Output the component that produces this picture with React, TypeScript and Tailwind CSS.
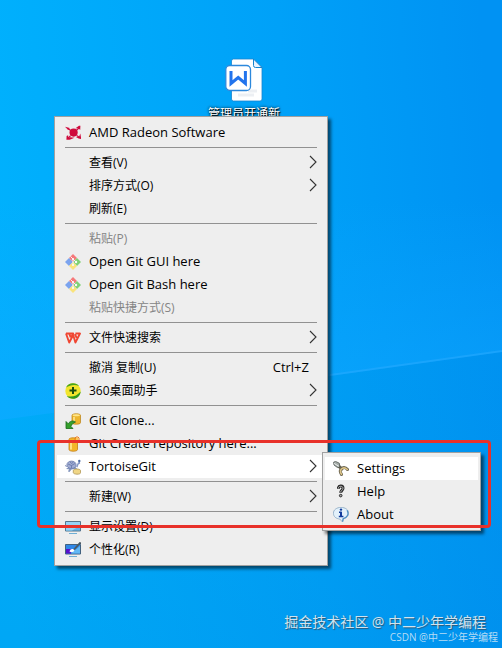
import type { ReactNode } from "react"
import clsx from "clsx"

interface MenuEntry {
  label: string
  icon?: ReactNode
  shortcut?: string
  disabled?: boolean
  active?: boolean
  arrow?: boolean
  latin?: boolean
  children?: MenuEntry[]
}

const Icon = ({ children }: { children: ReactNode }) => (
  <svg viewBox="0 0 16 16" className="h-4 w-4" aria-hidden="true">
    {children}
  </svg>
)

const RadeonIcon = () => (
  <Icon>
    <g fill="#cf0a3c">
      <circle cx="8.6" cy="7.6" r="4.1" />
      <path d="M0 1.800L4.800 3 3.200 5zM10.500 3.200L14 .8h1.400l-.2 4.200-1.500-1.400zM15.300 8.600l1 5.400-2.600-.4-2.800-1.600 3.200-.2zM5.500 12.300l4 .5-4.800 2H1.400L1.600 11l1.500-.8.3 2.200z" />
    </g>
    <path
      d="M2.800 3.400l2.600 1.800M14 3l-2.600 2.400M14.800 12.600l-3.200-2.200M2.600 13.600l3-3"
      stroke="#cf0a3c"
      strokeWidth="1.200"
      fill="none"
    />
  </Icon>
)

const GitIcon = () => (
  <Icon>
    <path d="M8 0l4 4-4 4-4-4z" fill="#f5797a" />
    <path d="M4 4l4 4-4 4-4-4z" fill="#7ba3ee" />
    <path d="M12 4l4 4-4 4-4-4z" fill="#80d174" />
    <path d="M8 8l4 4-4 4-4-4z" fill="#f9e37c" />
    <path d="M5.500 2.500L8 5v6M8 5l3 3" stroke="#f6f3f3" strokeWidth="1" fill="none" />
    <g fill="#f8fafc">
      <circle cx="8" cy="5" r="1.100" />
      <circle cx="11" cy="8" r="1.200" />
      <circle cx="8" cy="11" r="1.100" />
    </g>
  </Icon>
)

const WpsIcon = () => (
  <Icon>
    <path
      d="M1 3.500h7.200L6.400 7M1 3.500l3.200 9 4-7.500 2.200 7.500L15 3.500h-4.600M4.300 3.800l1.400 3.500M10 4l1.600 3.800"
      fill="none"
      stroke="#f04632"
      strokeWidth="1.900"
      strokeLinejoin="round"
    />
  </Icon>
)

const Desktop360Icon = () => (
  <Icon>
    <circle cx="8" cy="8" r="7.700" fill="#f2e52c" />
    <path d="M1 4.500C2.500 1.700 5 .3 8 .3c2.600 0 4.700 1 6 2.600C9.500 1.300 5 2 1 4.500z" fill="#47a51c" />
    <path d="M15.700 8.500c-.5 4.500-3.700 7.300-7.700 7.300-2.600 0-4.700-1-6.200-2.800 5 1.500 9.700.4 13.900-4.500z" fill="#2f9820" />
    <path d="M8 4v7M4.500 7.500h7" stroke="#174d10" strokeWidth="2" />
  </Icon>
)

const CloneIcon = () => (
  <Icon>
    <path d="M7 2.300C7 .3 15.500.3 15.500 2.300v7.400c0 2-8.500 2-8.500 0z" fill="#edb62e" stroke="#b88016" strokeWidth=".7" />
    <ellipse cx="11.250" cy="2.300" rx="3.600" ry="1" fill="#ffe58a" />
    <path d="M9 4v5.500" stroke="#ffe79a" strokeWidth="1.500" />
    <path d="M1 8.500v7h7l-2.200-2.200C7 11.200 8 10 10.500 9 8 7.200 5 8 3.200 10.700z" fill="#35a02c" stroke="#17691a" strokeWidth=".8" />
  </Icon>
)

const CreateIcon = () => (
  <Icon>
    <path d="M4 3.300c0-2 8.500-2 8.500 0v10.200c0 2.300-8.500 2.300-8.500 0z" fill="#f3b62a" stroke="#c47c10" strokeWidth=".8" />
    <path d="M6 5v8.500" stroke="#ffe58b" strokeWidth="1.800" />
    <path d="M12 0v6M9 3h6M10 1l4 4M14 1l-4 4" stroke="#ef7d18" strokeWidth="1" />
    <circle cx="12" cy="3" r="1" fill="#ffe067" />
  </Icon>
)

const TortoiseIcon = () => (
  <Icon>
    <path d="M1 10l2.500-2h7l2 2.500-2 .5-1-1-3 .5L4.500 13 3 12.500l1-2.200z" fill="#8395bd" />
    <ellipse cx="6.500" cy="5.800" rx="4.600" ry="3.700" fill="#a0acd2" stroke="#6c7cab" strokeWidth=".8" />
    <path d="M3 5l3.500 1.500L10 4.500M6.500 6.500V9M5 2.800l1.500 1.700L8.500 3M0 6.500l2 1" stroke="#6275a8" strokeWidth=".8" fill="none" />
    <path d="M11 7.500l2-4 1.800-.7.400 1.700-1.700 1-1 3z" fill="#8798c5" />
    <circle cx="14.300" cy="2" r="1.200" fill="#506fa6" />
    <path d="M8.300 11.500c0-2 7-2 7.200 0v2.300c0 2-6.800 1.700-7.200 0z" fill="#f0d686" stroke="#af9654" strokeWidth=".8" />
  </Icon>
)

const DisplayIcon = () => (
  <Icon>
    <path d="M.5 2.500h15v9.500H.5z" fill="#62b5ed" stroke="#55768e" />
    <path d="M1 3h14v4L7 11.500H1z" fill="#95d3f8" />
    <path d="M4 14.500h8" stroke="#6faed4" strokeWidth="1" />
  </Icon>
)

const PersonalizeIcon = () => (
  <Icon>
    <path d="M.5 2.500h15v9.500H.5z" fill="#2f87e8" stroke="#41617f" />
    <path d="M1 7h5v4.500H1z" fill="#5711cc" />
    <path d="M6 11.500L15 4v7.500z" fill="#62b8f5" />
    <path d="M4.500 9.500c.5-2 2-2.800 4-2.300l1 1.300c-1 1.700-3 2.200-5 1z" fill="#fff" />
    <path d="M9 7.500L15.600.3" stroke="#4c5963" strokeWidth="1.800" />
    <path d="M4 14.500h8" stroke="#6faed4" />
  </Icon>
)

const SettingsIcon = () => (
  <Icon>
    <path d="M6 5.500l3 2.500M8.500 13.500C6.500 11 7 8 9.500 6.800c2-.8 3.500-.1 5 1.700" fill="none" stroke="#67614e" strokeWidth="3" strokeLinecap="round" />
    <path d="M8.500 13.300c-1.700-2.500-1.300-5.100 1.100-6.100 1.900-.8 3.300 0 4.700 1.300" fill="none" stroke="#dcc487" strokeWidth="1.600" strokeLinecap="round" />
    <path d="M.6 1.200L2.500.4l3.800 1.800.6 3.600-2.600.6L1 4z" fill="#a5aca8" stroke="#4d5450" strokeWidth=".8" />
    <path d="M1 2.400l5 3" stroke="#e9eceb" strokeWidth="1" />
  </Icon>
)

const HelpIcon = () => (
  <Icon>
    <path d="M5.500 4.800V3.500C6 1.500 10 1.500 10 4.200c0 2.100-2.300 2.200-2.300 4.500" fill="none" stroke="#282828" strokeWidth="3" />
    <path d="M5.500 4.300v-.8C6 1.800 10 1.800 10 4.200c0 2.100-2.300 2.200-2.300 4" fill="none" stroke="#b8b8b8" strokeWidth="1" />
    <circle cx="7.700" cy="11.600" r="1.300" fill="#aaa" stroke="#282828" />
  </Icon>
)

const AboutIcon = () => (
  <Icon>
    <path d="M8 .4c4.300 0 7.600 2.400 7.600 5.800 0 2.800-2.200 4.900-5.300 5.600L9.500 15l-2.800-3C3 11.700.4 9.500.4 6.200.4 2.900 3.700.4 8 .4z" fill="#e3f1fb" stroke="#89a8c3" strokeWidth=".8" />
    <path d="M14 3.300c2.300 3.800.2 7.400-3.800 8.300l-.6 3" fill="none" stroke="#4d8fc4" strokeWidth="1.200" />
    <path d="M6 5.200h2v4.300M5.800 9.500h4.600" fill="none" stroke="#123c9c" strokeWidth="1.400" />
    <path d="M8 5v4" stroke="#123c9c" strokeWidth="2" />
    <circle cx="8" cy="2.600" r="1.200" fill="#123c9c" />
  </Icon>
)

const groups: MenuEntry[][] = [
  [{ label: "AMD Radeon Software", icon: <RadeonIcon />, latin: true }],
  [
    { label: "查看(V)", arrow: true },
    { label: "排序方式(O)", arrow: true },
    { label: "刷新(E)" },
  ],
  [
    { label: "粘贴(P)", disabled: true },
    { label: "Open Git GUI here", icon: <GitIcon />, latin: true },
    { label: "Open Git Bash here", icon: <GitIcon />, latin: true },
    { label: "粘贴快捷方式(S)", disabled: true },
  ],
  [{ label: "文件快速搜索", icon: <WpsIcon />, arrow: true }],
  [
    { label: "撤消 复制(U)", shortcut: "Ctrl+Z" },
    { label: "360桌面助手", icon: <Desktop360Icon />, arrow: true },
  ],
  [
    { label: "Git Clone...", icon: <CloneIcon />, latin: true },
    { label: "Git Create repository here...", icon: <CreateIcon />, latin: true },
    {
      label: "TortoiseGit",
      icon: <TortoiseIcon />,
      latin: true,
      active: true,
      arrow: true,
      children: [
        { label: "Settings", icon: <SettingsIcon />, latin: true, active: true },
        { label: "Help", icon: <HelpIcon />, latin: true },
        { label: "About", icon: <AboutIcon />, latin: true },
      ],
    },
  ],
  [{ label: "新建(W)", arrow: true }],
  [
    { label: "显示设置(D)", icon: <DisplayIcon /> },
    { label: "个性化(R)", icon: <PersonalizeIcon /> },
  ],
]

const MenuItem = ({ item }: { item: MenuEntry }) => (
  <li className="relative">
    <button
      type="button"
      disabled={item.disabled}
      className={clsx(
        "flex h-[23px] w-full items-center px-2 text-left whitespace-nowrap",
        item.latin ? "text-[13px]" : "text-xs",
        item.disabled ? "text-[#858585]" : "text-black",
        item.active && "bg-white"
      )}
    >
      <span className="mr-2 w-4 shrink-0">{item.icon}</span>
      <span className="grow">{item.label}</span>
      {item.shortcut && <span className="pr-2 text-[13px]">{item.shortcut}</span>}
      {item.arrow && (
        <svg viewBox="0 0 8 16" className="h-4 w-2" aria-hidden="true">
          <path d="M1 1l6 6-6 6" fill="none" stroke="#333" strokeWidth="1.100" />
        </svg>
      )}
    </button>
    {item.children && (
      <div className="absolute -top-[8px] left-full -ml-[3px] w-[159px] pt-[5px]">
        <Menu groups={[item.children]} />
      </div>
    )}
  </li>
)

const Menu = ({ groups }: { groups: MenuEntry[][] }) => (
  <div className="border border-[#a0a0a0] bg-[#eeeeee] px-[2px] py-1 shadow-[3px_3px_3px_rgba(0,0,0,0.55)]">
    {groups.map((items, i) => (
      <div key={i}>
        {i > 0 && <hr className="mx-2 my-[3px] border-t border-[#919191]" />}
        <ul>
          {items.map((item) => (
            <MenuItem key={item.label} item={item} />
          ))}
        </ul>
      </div>
    ))}
  </div>
)

const DesktopFile = () => (
  <div className="absolute top-[58px] left-[208px] flex w-[72px] flex-col items-center">
    <svg viewBox="0 0 38 44" className="h-11 w-[38px]" aria-hidden="true">
      <path d="M8.500 1h20L37 9.500V41q0 2-2 2H8.500q-2 0-2-2V3q0-2 2-2z" fill="#fff" stroke="#1684cf" strokeWidth=".8" />
      <path d="M28.500 1v6.500q0 2 2 2H37z" fill="#e8f3ff" stroke="#1684cf" strokeWidth="1" />
      <path d="M13 37h16M23 33h9" stroke="#eceff3" strokeWidth="3" />
      <rect x=".8" y="7.500" width="24.700" height="25" rx="4" fill="#fff" stroke="#2c88dc" strokeWidth="1.300" />
      <path d="M6 13v12.500l7.200-6 7.200 6V13" fill="none" stroke="#2274ed" strokeWidth="3" />
    </svg>
    <span className="mt-1 text-xs whitespace-nowrap text-white [text-shadow:1px_1px_1px_#000,0_0_3px_#000]">
      管理员开通新
    </span>
  </div>
)

const Wallpaper = () => (
  <svg
    viewBox="0 0 502 648"
    preserveAspectRatio="none"
    className="absolute inset-0 h-full w-full"
    aria-hidden="true"
  >
    <defs>
      <linearGradient id="sky" x1="0" y1="0.550" x2="1" y2="0.450">
        <stop offset="0" stopColor="#00b1fd" />
        <stop offset="0.600" stopColor="#00a1f8" />
        <stop offset="1" stopColor="#0092f3" />
      </linearGradient>
      <linearGradient id="beam" x1="0" y1="0" x2="0" y2="1">
        <stop offset="0" stopColor="#10a6ff" stopOpacity="0" />
        <stop offset="1" stopColor="#10a6ff" stopOpacity="0.600" />
      </linearGradient>
      <linearGradient id="low" x1="0" y1="0" x2="0" y2="1">
        <stop offset="0" stopColor="#0092e0" stopOpacity="0.150" />
        <stop offset="1" stopColor="#0088dc" stopOpacity="0.250" />
      </linearGradient>
    </defs>
    <path d="M0 0h502v648H0z" fill="url(#sky)" />
    <path d="M0 200h502v152L330 376 0 420z" fill="url(#beam)" />
    <path d="M0 420L330 376 502 352v296H0z" fill="url(#low)" />
    <path d="M330 375L502 351" stroke="#2cabff" strokeOpacity=".5" strokeWidth="2" />
  </svg>
)

const App = () => (
  <main className="relative min-h-screen overflow-hidden bg-[#00a2f7] font-['Open_Sans','Noto_Sans_CJK_SC',sans-serif]">
    <Wallpaper />
    <DesktopFile />
    <div className="absolute top-[116px] left-[54px] w-[274px]">
      <Menu groups={groups} />
    </div>
    <div className="pointer-events-none absolute top-[440px] left-[37px] h-[88px] w-[454px] rounded border-3 border-[#e8312a]" />
    <footer className="absolute right-1 bottom-1 flex flex-col items-end whitespace-nowrap text-[#cfe3f0]">
      <p className="pr-3 text-sm leading-4 [text-shadow:1px_1px_1px_rgba(60,70,80,0.8)]">
        掘金技术社区 @ 中二少年学编程
      </p>
      <p className="text-[10px] leading-[14px] text-[#b5dcf5]">CSDN @中二少年学编程</p>
    </footer>
  </main>
)

export default App
